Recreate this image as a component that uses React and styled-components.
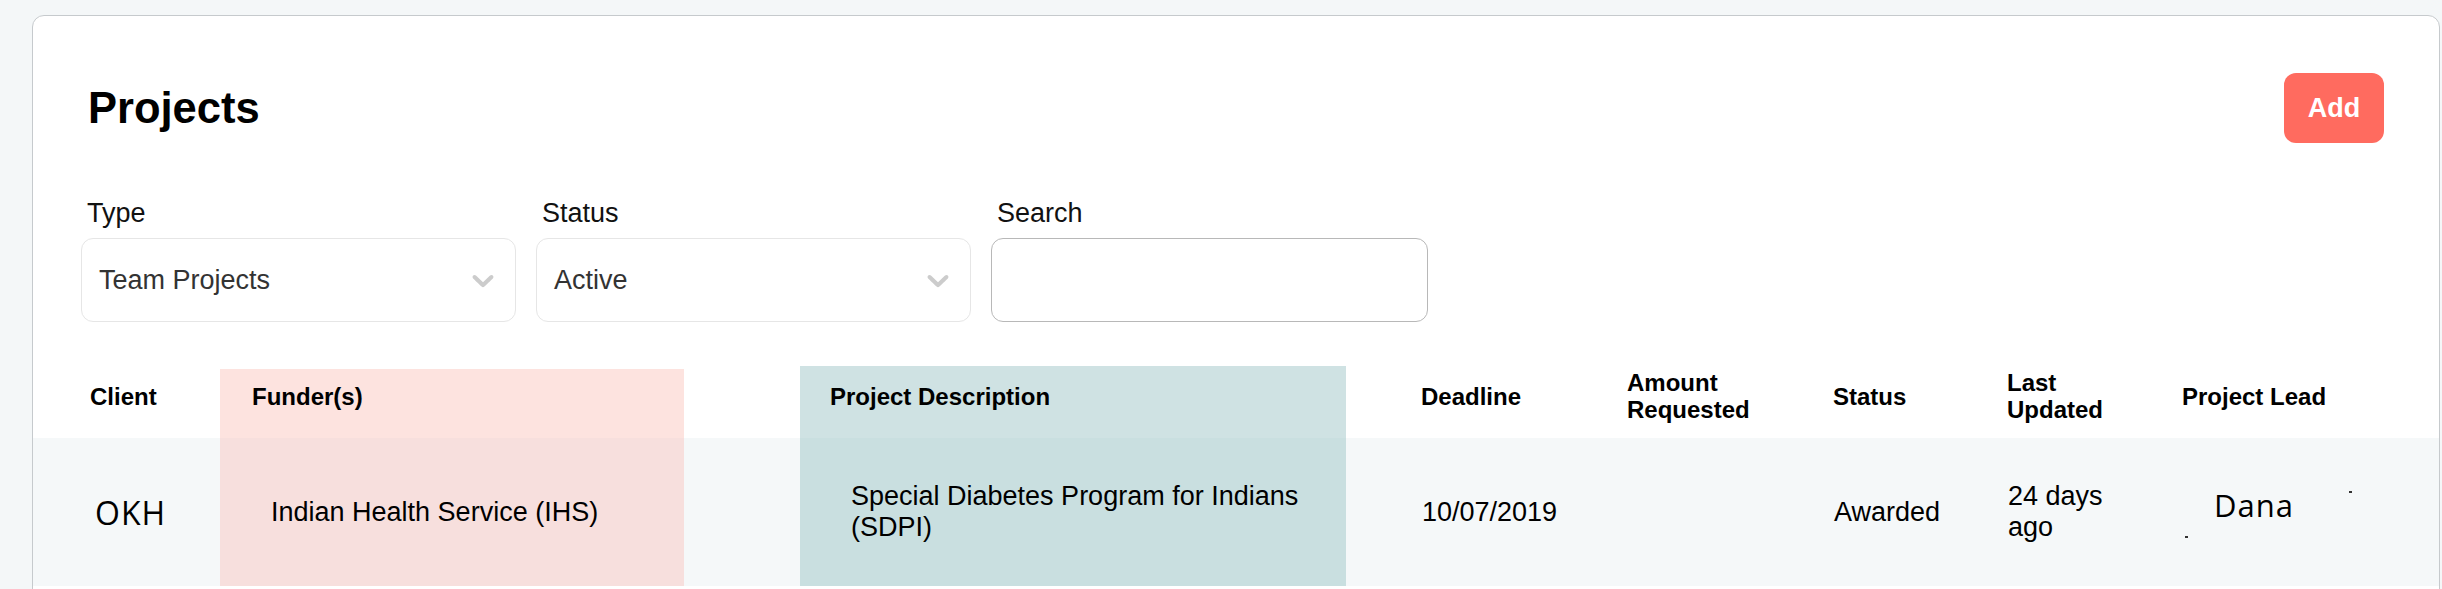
import React from "react";
import styled, { createGlobalStyle } from "styled-components";

const GlobalStyle = createGlobalStyle`
  html, body {
    margin: 0;
    padding: 0;
    background: #f4f7f8;
    overflow: hidden;
  }
  * { box-sizing: border-box; }
`;

const SANS = `"Liberation Sans", Arial, sans-serif`;
const ROUND = `"Open Sans", "Noto Sans", sans-serif`;

const Page = styled.div`
  width: 2442px;
  height: 589px;
  padding: 15px 2px 0 32px;
  font-family: ${SANS};
`;

const Card = styled.section`
  background: #ffffff;
  border: 1px solid #c6cacd;
  border-radius: 12px;
  padding: 57px 0 60px 0;
`;

const HeaderRow = styled.div`
  display: flex;
  align-items: center;
  justify-content: space-between;
  height: 70px;
  padding: 0 55px;
`;

const Title = styled.h1`
  margin: 0;
  font-family: ${SANS};
  font-weight: 700;
  font-size: 43.5px;
  line-height: 48px;
  color: #000;
`;

const AddButton = styled.button`
  width: 100px;
  height: 70px;
  border: none;
  border-radius: 12px;
  background: #ff6b5f;
  color: #fff;
  font-family: ${SANS};
  font-weight: 700;
  font-size: 27px;
  padding: 0;
`;

const Filters = styled.div`
  display: grid;
  grid-template-columns: 435px 435px 437px;
  column-gap: 20px;
  margin-top: 55px;
  padding: 0 48px;
`;

const Field = styled.div`
  display: flex;
  flex-direction: column;
`;

const Label = styled.label`
  font-family: ${SANS};
  font-size: 27px;
  line-height: 31px;
  color: #111;
  padding-left: 6px;
  margin-bottom: 9px;
`;

const SelectBox = styled.div`
  height: 84px;
  border: 1px solid #e6e6e6;
  border-radius: 12px;
  background: #fff;
  display: flex;
  align-items: center;
  justify-content: space-between;
  padding: 0 14px 0 17px;
`;

const SelectValue = styled.span`
  font-family: ${SANS};
  font-size: 27px;
  color: #333;
`;

const SearchBox = styled.input`
  height: 84px;
  border: 1px solid #b8b8b8;
  border-radius: 12px;
  background: #fff;
  outline: none;
  padding: 0 17px;
  font-family: ${SANS};
  font-size: 27px;
`;

const Chevron = () => (
  <svg width="36" height="36" viewBox="0 0 20 20" fill="#cccccc" aria-hidden="true">
    <path d="M4.516 7.548c0.436-0.446 1.043-0.481 1.576 0l3.908 3.747 3.908-3.747c0.533-0.481 1.141-0.446 1.574 0 0.436 0.445 0.408 1.197 0 1.615-0.406 0.418-4.695 4.502-4.695 4.502-0.217 0.223-0.502 0.335-0.787 0.335s-0.57-0.112-0.789-0.335c0 0-4.287-4.084-4.695-4.502s-0.436-1.17 0-1.615z" />
  </svg>
);

const columns = [
  { key: "client", label: "Client", hp: 57, rp: 62 },
  { key: "funder", label: "Funder(s)", hp: 32, rp: 51, tone: "pink" },
  { key: "gap", label: "", hp: 0, rp: 0 },
  { key: "desc", label: "Project Description", hp: 30, rp: 51, tone: "teal" },
  { key: "deadline", label: "Deadline", hp: 75, rp: 76 },
  { key: "amount", label: "Amount Requested", hp: 32, rp: 32 },
  { key: "status", label: "Status", hp: 31, rp: 32 },
  { key: "updated", label: "Last Updated", hp: 30, rp: 31 },
  { key: "lead", label: "Project Lead", hp: 30, rp: 62 },
];

const headTones = { pink: "#fde3df", teal: "#cfe2e3" };
const rowTones = { pink: "#f7dfdd", teal: "#c9dfe0" };

const Table = styled.div`
  display: grid;
  grid-template-columns: 187px 464px 116px 546px 249px 207px 175px 175px 1fr;
  margin-top: 44px;
`;

const HeadCell = styled.div`
  display: flex;
  align-items: center;
  padding: 0 12px 12px ${(p) => p.$pad}px;
  margin-top: ${(p) => (p.$tone === "pink" ? 3 : 0)}px;
  min-height: ${(p) => (p.$tone === "pink" ? 69 : 72)}px;
  padding-bottom: ${(p) => (p.$tone === "pink" ? 15 : 12)}px;
  background: ${(p) => (p.$tone ? headTones[p.$tone] : "#ffffff")};
  font-family: ${SANS};
  font-weight: 700;
  font-size: 24px;
  line-height: 27px;
  color: #000;
`;

const BodyCell = styled.div`
  position: relative;
  height: 148px;
  display: flex;
  align-items: center;
  padding: 0 ${(p) => p.$right}px 0 ${(p) => p.$pad}px;
  background: ${(p) => (p.$tone ? rowTones[p.$tone] : "#f5f8f9")};
  font-family: ${SANS};
  font-size: 27px;
  line-height: 31px;
  color: #000;
`;

const ClientCode = styled.span`
  font-family: ${ROUND};
  font-size: 32px;
  font-weight: 400;
  letter-spacing: 1px;
  color: #000;
`;

const LeadName = styled.span`
  font-family: ${ROUND};
  font-size: 31px;
  letter-spacing: 1px;
  margin-top: -14px;
  color: #000;
`;

const Speck = styled.span`
  position: absolute;
  width: 3px;
  height: 2px;
  background: #333;
  left: ${(p) => p.$x}px;
  top: ${(p) => p.$y}px;
`;

const row = {
  client: <ClientCode>OKH</ClientCode>,
  funder: "Indian Health Service (IHS)",
  gap: "",
  desc: "Special Diabetes Program for Indians (SDPI)",
  deadline: "10/07/2019",
  amount: "",
  status: "Awarded",
  updated: "24 days ago",
  lead: (
    <>
      <LeadName>Dana</LeadName>
      <Speck $x={197} $y={53} />
      <Speck $x={33} $y={98} />
    </>
  ),
};

export default function App() {
  return (
    <>
      <GlobalStyle />
      <Page>
        <Card>
          <HeaderRow>
            <Title>Projects</Title>
            <AddButton>Add</AddButton>
          </HeaderRow>

          <Filters>
            <Field>
              <Label>Type</Label>
              <SelectBox>
                <SelectValue>Team Projects</SelectValue>
                <Chevron />
              </SelectBox>
            </Field>
            <Field>
              <Label>Status</Label>
              <SelectBox>
                <SelectValue>Active</SelectValue>
                <Chevron />
              </SelectBox>
            </Field>
            <Field>
              <Label>Search</Label>
              <SearchBox type="text" />
            </Field>
          </Filters>

          <Table>
            {columns.map((c) => (
              <HeadCell key={`h-${c.key}`} $pad={c.hp} $tone={c.tone}>
                {c.label}
              </HeadCell>
            ))}
            {columns.map((c) => (
              <BodyCell
                key={`r-${c.key}`}
                $pad={c.rp}
                $right={c.key === "updated" ? 12 : 20}
                $tone={c.tone}
              >
                {row[c.key]}
              </BodyCell>
            ))}
          </Table>
        </Card>
      </Page>
    </>
  );
}
